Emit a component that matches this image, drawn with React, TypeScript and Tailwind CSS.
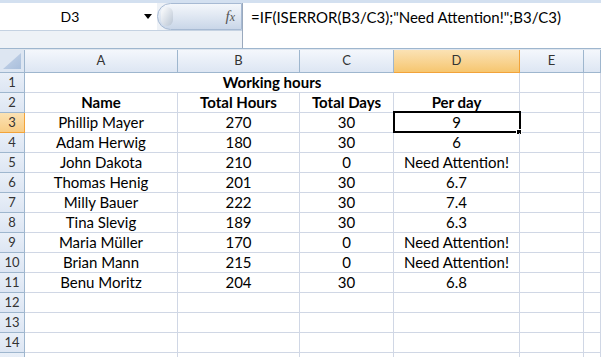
import React from "react";

const rows: [string, string, string, string][] = [
  ["Phillip Mayer", "270", "30", "9"],
  ["Adam Herwig", "180", "30", "6"],
  ["John Dakota", "210", "0", "Need Attention!"],
  ["Thomas Henig", "201", "30", "6.7"],
  ["Milly Bauer", "222", "30", "7.4"],
  ["Tina Slevig", "189", "30", "6.3"],
  ["Maria Müller", "170", "0", "Need Attention!"],
  ["Brian Mann", "215", "0", "Need Attention!"],
  ["Benu Moritz", "204", "30", "6.8"],
];

const cols = "grid grid-cols-[25px_153px_122px_94px_126px_64px_1fr]";
const cell = "h-5 border-r border-b border-[#d0d7e5] flex items-center justify-center overflow-hidden whitespace-nowrap";
const rowHead =
  "h-5 border-r border-b border-[#9eb6ce] bg-gradient-to-b from-[#e9eff8] to-[#dde6f3] flex items-center justify-center text-[13px] text-[#333]";
const rowHeadSel =
  "h-5 border-r border-b border-[#f2a33a] bg-gradient-to-b from-[#fbe2b4] to-[#f8cd86] flex items-center justify-center text-[13px] text-[#333]";

function Row({ n, label, children }: { n: number; label?: string; children: React.ReactNode }) {
  return (
    <div className={cols}>
      <div className={n === 3 ? rowHeadSel : rowHead}>{label ?? n}</div>
      {children}
    </div>
  );
}

export default function App() {
  return (
    <div className="h-[357px] w-[601px] overflow-hidden bg-white font-['Lato',sans-serif] text-[15px] text-black">
      {/* ribbon edge */}
      <div className="h-[3px] bg-[#d3e0f0]" />

      {/* name box + formula bar */}
      <div className="flex h-[45px] bg-[#eef2f7]">
        <div className="flex w-[242px] flex-col">
          <div className="flex h-[27px]">
            <div className="relative flex w-[157px] items-center bg-white">
              <span className="w-[140px] text-center text-[14px]">D3</span>
              <span className="absolute left-[144px] top-[11px] h-0 w-0 border-x-[4px] border-t-[5px] border-x-transparent border-t-black" />
            </div>
            <div className="relative flex flex-1 items-center justify-end rounded-l-full border border-[#a7bad3] bg-gradient-to-b from-[#f4f7fb] via-[#dfe7f2] to-[#c9d6e8] pr-[6px]">
              <span className="absolute left-[3px] top-[3px] h-[19px] w-[12px] rounded-full bg-gradient-to-br from-white to-[#b9c5d4]" />
              <span className="font-['Liberation_Serif',serif] text-[15px] italic text-[#555]">
                f<span className="text-[12px]">x</span>
              </span>
            </div>
          </div>
          <div className="flex-1 border-t border-[#c5d2e2]" />
        </div>
        <div className="flex-1 border-l border-[#9aa9bd] bg-white pl-[8px] pt-[3px] text-[15px]">
          =IF(ISERROR(B3/C3);"Need Attention!";B3/C3)
        </div>
      </div>

      {/* separator */}
      <div className="h-[2px] border-t border-[#9eb6ce] bg-[#dfe6ef]" />

      {/* column headers */}
      <div className={`${cols} h-[23px]`}>
        <div className="flex items-end justify-end border-r border-b border-[#9eb6ce] bg-[#dde6f2] p-[3px]">
          <div className="h-[16px] w-[18px] bg-gradient-to-br from-[#c8d6ea] to-[#a9bfdc] [clip-path:polygon(100%_0,100%_100%,0_100%)]" />
        </div>
        {["A", "B", "C", "D", "E", ""].map((c) => (
          <div
            key={c || "F"}
            className={
              c === "D"
                ? "flex items-center justify-center border-r border-b border-[#f2a33a] bg-gradient-to-b from-[#fbe2b4] to-[#f6c66f] text-[13px] text-[#333]"
                : "flex items-center justify-center border-r border-b border-[#9eb6ce] bg-gradient-to-b from-[#f4f7fc] to-[#dde6f3] text-[13px] text-[#333]"
            }
          >
            {c}
          </div>
        ))}
      </div>

      <Row n={1}>
        <div className={`${cell} col-span-4 font-bold`}>Working hours</div>
        <div className={cell} />
        <div className={cell} />
      </Row>
      <Row n={2}>
        {["Name", "Total Hours", "Total Days", "Per day"].map((h) => (
          <div key={h} className={`${cell} font-bold`}>
            {h}
          </div>
        ))}
        <div className={cell} />
        <div className={cell} />
      </Row>
      {rows.map((r, i) => (
        <Row key={r[0]} n={i + 3}>
          <div className={cell}>{r[0]}</div>
          <div className={cell}>{r[1]}</div>
          <div className={cell}>{r[2]}</div>
          <div className={`${cell} relative overflow-visible`}>
            {r[3]}
            {i === 0 && (
              <>
                <span className="absolute -left-[1px] -top-[2px] h-[22px] w-[128px] border-[2px] border-black" />
                <span className="absolute -bottom-[3px] -right-[3px] h-[6px] w-[6px] border border-white bg-black" />
              </>
            )}
          </div>
          <div className={cell} />
          <div className={cell} />
        </Row>
      ))}
      {[12, 13, 14, 15].map((n) => (
        <Row key={n} n={n} label={n === 15 ? "" : undefined}>
          {[0, 1, 2, 3, 4, 5].map((k) => (
            <div key={k} className={cell} />
          ))}
        </Row>
      ))}
    </div>
  );
}
